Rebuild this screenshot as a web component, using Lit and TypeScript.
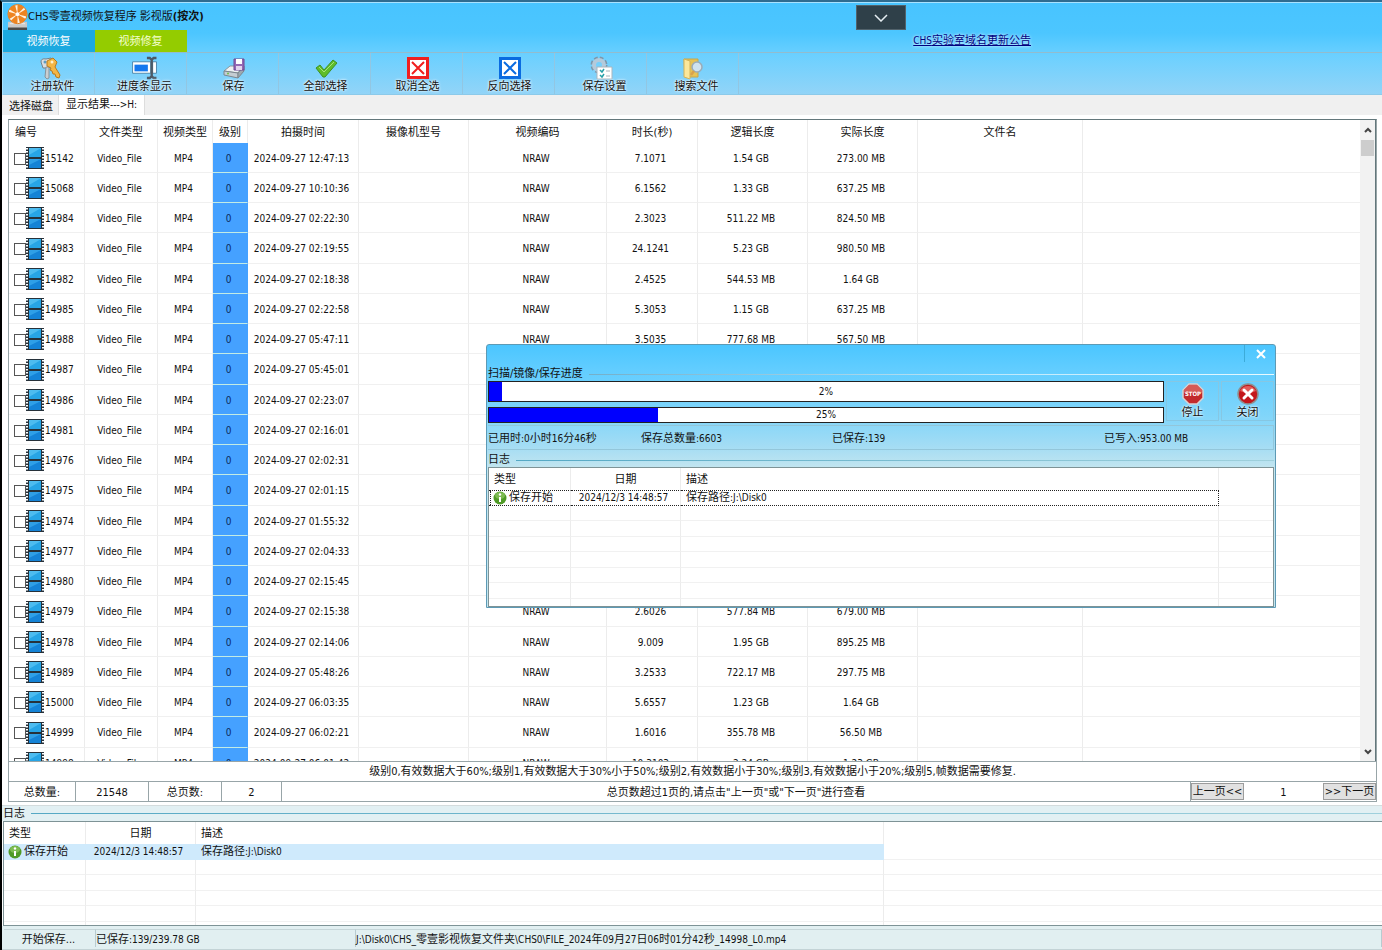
import { LitElement, html, svg, css, TemplateResult } from "lit";
import { customElement } from "lit/decorators.js";

type Row = [string, string, string, string, string];

const ROWS: Row[] = [
  ["15142", "2024-09-27 12:47:13", "7.1071", "1.54 GB", "273.00 MB"],
  ["15068", "2024-09-27 10:10:36", "6.1562", "1.33 GB", "637.25 MB"],
  ["14984", "2024-09-27 02:22:30", "2.3023", "511.22 MB", "824.50 MB"],
  ["14983", "2024-09-27 02:19:55", "24.1241", "5.23 GB", "980.50 MB"],
  ["14982", "2024-09-27 02:18:38", "2.4525", "544.53 MB", "1.64 GB"],
  ["14985", "2024-09-27 02:22:58", "5.3053", "1.15 GB", "637.25 MB"],
  ["14988", "2024-09-27 05:47:11", "3.5035", "777.68 MB", "567.50 MB"],
  ["14987", "2024-09-27 05:45:01", "", "", ""],
  ["14986", "2024-09-27 02:23:07", "", "", ""],
  ["14981", "2024-09-27 02:16:01", "", "", ""],
  ["14976", "2024-09-27 02:02:31", "", "", ""],
  ["14975", "2024-09-27 02:01:15", "", "", ""],
  ["14974", "2024-09-27 01:55:32", "", "", ""],
  ["14977", "2024-09-27 02:04:33", "", "", ""],
  ["14980", "2024-09-27 02:15:45", "", "", ""],
  ["14979", "2024-09-27 02:15:38", "2.6026", "577.84 MB", "679.00 MB"],
  ["14978", "2024-09-27 02:14:06", "9.009", "1.95 GB", "895.25 MB"],
  ["14989", "2024-09-27 05:48:26", "3.2533", "722.17 MB", "297.75 MB"],
  ["15000", "2024-09-27 06:03:35", "5.6557", "1.23 GB", "1.64 GB"],
  ["14999", "2024-09-27 06:02:21", "1.6016", "355.78 MB", "56.50 MB"],
  ["14998", "2024-09-27 06:01:42", "10.3103", "2.24 GB", "1.23 GB"],
];

const HEADS = ["编号", "文件类型", "视频类型", "级别", "拍摄时间", "摄像机型号", "视频编码", "时长(秒)", "逻辑长度", "实际长度", "文件名", ""];
const COLS = ["c76", "c73", "c55", "c35", "c111", "c110", "c138", "c91", "c110", "c110", "c165", "rest"];

// Latin runs are set one size smaller than the Chinese text around them.
const mix = (text: string) => text.split(/([\x20-\x7e]+)/).map((part, i) => (i % 2 ? html`<span class="latin">${part}</span>` : part));

const keysIcon = svg`
  <path d="M2 5 Q2 1 7 2 L12 1 L14 7 L10 11 H4Z" fill="#d9dde0" stroke="#75818a"/>
  <path d="M7 10 H10 V21 L8 22 L6 20Z" fill="#c9ced2" stroke="#87939b"/>
  <circle cx="6" cy="5" r="1.5" fill="#5c9cc4"/>
  <path d="M8 4 L14 1 L18 5 L16 10 L21 18 L20 21 L17 20 L16 17 L14 17 L13 14 L11 13 L12 11 L8 9Z" fill="#f3b646" stroke="#b77a1e"/>
  <circle cx="13" cy="5" r="1.5" fill="#fff3cf"/>`;
const barIcon = svg`
  <path d="M1 5 H20 V17 H1Z" fill="#fff" stroke="#4b86ad" stroke-width="1"/>
  <path d="M3 8 H17 V15 H3Z" fill="#1478ee"/>
  <path d="M22 5 H26 V17 H22Z" fill="#fff" stroke="#4b86ad" stroke-width="1"/>
  <path d="M16 1 H19 L21 3 L23 1 H26 M21 3 V20 M16 22 H19 L21 20 L23 22 H26" fill="none" stroke="#4d5a66" stroke-width="2.500"/>`;
const saveIcon = svg`
  <path d="M1 14 L7 9 H20 L15 16Z" fill="#eef1f3" stroke="#8b969d"/>
  <path d="M1 14 L15 16 V21 L1 18Z" fill="#c5cdd2" stroke="#7c878e"/>
  <path d="M15 16 L21 9 V14 L15 21Z" fill="#9ea9b0" stroke="#7c878e"/>
  <path d="M11 2 H21 V13 H11Z" fill="#9468b4" stroke="#6e4893"/>
  <path d="M13 2 H19 V7 H13Z" fill="#fff"/><path d="M13 9 H19 V13 H13Z" fill="#e3d4ee"/>
  <circle cx="5" cy="16.500" r="1" fill="#6fbf4a"/>`;
const checkIcon = svg`<path d="M1 11 L5 8 L9 13 L18 3 L22 6 L10 20 L8 20Z" fill="#5fbd2a" stroke="#3d9124" stroke-linejoin="round"/><path d="M4 10 L9 15 L19 5" fill="none" stroke="#a5e27a"/>`;
const boxIcon = (c: string) => svg`
  <path d="M1.500 1.500 H20.500 V20.500 H1.500Z" fill="#fff" stroke="${c}" stroke-width="3"/>
  <path d="M5 5 L17 17 M17 5 L5 17" stroke="${c}" stroke-width="2"/>`;
const settingsIcon = svg`
  <circle cx="8" cy="8" r="6" fill="none" stroke="#7d97ab" stroke-width="5" stroke-dasharray="3 1.700"/>
  <circle cx="8" cy="8" r="5" fill="none" stroke="#b4cadb" stroke-width="4"/>
  <path d="M6 10 H21 V22 H6Z" fill="#fff" stroke="#a9b6bf"/>
  <path d="M9 13 L11 15 L13 12 M9 18 L11 20 L13 17" fill="none" stroke="#25a0a8" stroke-width="1.500"/>
  <path d="M15 14 H19 M15 19 H19" stroke="#a7b3bb"/>`;
const folderIcon = svg`
  <path d="M1 2 H9 L15 2 V20 H2Z" fill="#e7c353" stroke="#c6a64a"/>
  <path d="M1 2 L7 4 V22 L1 20Z" fill="#fbe79a" stroke="#d3b358"/>
  <circle cx="14" cy="10" r="5" fill="#cfe3ef" stroke="#9aacb8" stroke-width="1.500"/>
  <path d="M11 14 L8 18" stroke="#d9a24b" stroke-width="2.500"/>`;

const TOOLS: [string, TemplateResult, boolean][] = [
  ["注册软件", keysIcon as any, true],
  ["进度条显示", barIcon as any, true],
  ["保存", saveIcon as any, false],
  ["全部选择", checkIcon as any, false],
  ["取消全选", boxIcon("#f01f1f") as any, false],
  ["反向选择", boxIcon("#0a6be0") as any, false],
  ["保存设置", settingsIcon as any, true],
  ["搜索文件", folderIcon as any, true],
];

const film = html`<svg class="film" viewBox="0 0 18 22" aria-hidden="true">
  <path d="M0 0 H18 V22 H0Z" fill="#26313a"/>
  <path d="M3 1 H15 V10 H3Z" fill="#27a5e6"/><path d="M3 12 H15 V21 H3Z" fill="#1583d6"/>
  <path d="M3 1 H15 L3 8Z" fill="#4dbcf0"/><path d="M3 12 H15 L3 18Z" fill="#2f9fe6"/>
  <path d="M1 1 V22 M17 1 V22" stroke="#fff" stroke-width="2" stroke-dasharray="1.500 1.500"/>
</svg>`;

const info = html`<svg class="info" viewBox="0 0 14 14" aria-hidden="true">
  <circle cx="7" cy="7" r="6.500" fill="#4f9a26"/><ellipse cx="7" cy="4.500" rx="5" ry="3.500" fill="#7dbb52"/>
  <path d="M7 6 V11" stroke="#fff" stroke-width="2"/><circle cx="7" cy="3.500" r="1.200" fill="#fff"/></svg>`;

const logo = html`<svg class="logo" viewBox="0 0 22 28" aria-hidden="true">
  <path d="M1 19 H21 V26 H1Z" fill="#c9c9c9"/><path d="M1 25 H21 V28 H1Z" fill="#4a4a4a"/>
  <path d="M3 21 H19" stroke="#eee"/>
  <circle cx="11" cy="11" r="10" fill="#fff3df" stroke="#d9771c"/>
  ${[0, 60, 120, 180, 240, 300].map((a) => svg`<path d="M11 11 L11 1 A10 10 0 0 1 18 4Z" fill="#ee8420" transform="rotate(${a} 11 11)"/>`)}
  <circle cx="11" cy="11" r="2" fill="#fff"/></svg>`;

@customElement("app-root")
export class AppRoot extends LitElement {
  static styles = css`
    :host {
      display: flex; flex-direction: column; height: 100vh; box-sizing: border-box; position: relative; overflow: hidden;
      border-top: 2px solid #2f6c90; border-left: 2px solid #000; background: #fff; color: #111;
      font: 11px/14px "DejaVu Sans Condensed", "Noto Sans", "Noto Sans CJK SC", sans-serif;
    }
    * { box-sizing: border-box; }
    button { font: inherit; color: inherit; padding: 0; margin: 0; border: 0; background: none; }
    .latin { font-size: 10px; }
    .top { background: linear-gradient(#48c4ff 0, #4cc6ff 30px, #6bd0ff 52px, #93d4f7 100%); border-left: 1px solid #a8e2ff; border-top: 1px solid #a8e2ff; }
    .title { display: flex; align-items: center; height: 27px; padding-left: 4px; }
    .logo { width: 21px; height: 28px; flex: none; }
    h1 { font-size: 11px; font-weight: normal; margin: 0; }
    .modes { display: flex; align-items: center; height: 22px; }
    .mode { width: 92px; height: 22px; color: #fff; background: #1ba9e0; padding-top: 1px; padding-right: 1px; }
    .mode.green { background: #94cc00; color: #f4ffd0; }
    .notice { margin-left: auto; margin-right: 351px; color: #000080; text-decoration: underline; text-shadow: 0 0 3px #fff; }
    .drawer { position: absolute; right: 476px; top: 3px; width: 50px; height: 25px; background: #2f4049; border: 1px solid #52626b; display: grid; place-items: center; }
    .drawer svg { width: 14px; height: 8px; }
    .tools { display: flex; height: 43px; border-top: 1px solid #93bccd; border-bottom: 1px solid #8ccaea; }
    .tool { width: 92px; border-right: 1px solid #92c6e2; display: flex; flex-direction: column; align-items: center; padding: 4px 0 0 2px; }
    .tool.indent { padding-left: 8px; }
    .tool svg { width: 22px; height: 22px; flex: none; overflow: visible; margin-bottom: 1px; }
    .tool.indent svg { margin-right: 6px; }
    .tool svg.wide { width: 28px; margin-right: 0; }
    .tool span, .act span { text-shadow: 0 0 3px #fff, 0 0 2px #fff; }
    .tabs { display: flex; height: 20px; padding-left: 2px; background: #f0f0f0; }
    .tab { height: 20px; padding: 3px 5px 0; border-right: 1px solid #ddd; }
    .tab.on { background: #fff; padding-top: 0; width: 86px; }

    .main { flex: 1; min-height: 0; display: flex; flex-direction: column; margin: 4px 5px 3px 6px; border: 1px solid #98a5a8; border-top-color: #63777b; }
    .list { flex: 1; min-height: 0; display: flex; overflow: hidden; }
    .clip { flex: 1; min-width: 0; overflow: hidden; }
    table { border-collapse: separate; border-spacing: 0; table-layout: fixed; width: 100%; }
    th { font-weight: normal; padding: 2px 0 0; }
    td { padding: 0; }
    .files th { height: 23px; border-right: 1px solid #ececec; }
    .files th:first-child { text-align: left; padding-left: 6px; }
    .files td { font-size: 10px; height: 30px; padding-top: 2px; text-align: center; border-right: 1px solid #ececec; border-bottom: 1px solid #f0f0f0; white-space: nowrap; }
    .files tr:nth-child(4n) td { height: 31px; }
    .files td:nth-child(n + 2) { padding-right: 3px; }
    .files td.level { background: #45a1ff; border-right-color: #45a1ff; border-bottom-color: #c3ece4; color: #0a2a5c; }
    .files th:last-child, .files td:last-child { border-right: 0; }
    .id { display: flex; align-items: center; padding-left: 5px; }
    .id input { appearance: none; width: 12px; height: 12px; margin: 0; border: 1px solid #555; background: #fff; flex: none; }
    .film { width: 18px; height: 22px; flex: none; margin: -1px 1px 0 0; }
    .c76 { width: 76px; } .c73 { width: 73px; } .c55 { width: 55px; } .c35 { width: 35px; } .c111 { width: 111px; }
    .c110 { width: 110px; } .c138 { width: 138px; } .c91 { width: 91px; } .c165 { width: 165px; } .c82 { width: 82px; }
    .c538 { width: 538px; } .c688 { width: 688px; }
    .scroll { width: 16px; background: #f2f2f2; display: flex; flex-direction: column; align-items: center; border-right: 1px solid #63777b; }
    .scroll button { height: 20px; width: 15px; display: grid; place-items: center; }
    .scroll button:last-child { height: 18px; }
    .scroll svg { width: 8px; height: 6px; }
    .thumb { width: 13px; height: 16px; background: #cdcdcd; }
    .space { flex: 1; }
    .legend { height: 20px; border-top: 1px solid #98a5a8; text-align: center; padding-top: 3px; white-space: nowrap; }
    .pager { display: flex; height: 20px; border-top: 1px solid #98a5a8; text-align: center; line-height: 21px; }
    .pager > span { border-right: 1px solid #98a5a8; height: 19px; }
    .w67 { width: 67px; } .w73 { width: 73px; } .w60 { width: 60px; }
    .grow { flex: 1; }
    .pg { background: #e1e1e1; border: 1px solid #9c9c9c; width: 53px; height: 17px; margin-top: 1px; line-height: 16px; white-space: nowrap; }
    .pager > .num { border: 0; width: 79px; }

    .group { display: flex; align-items: center; gap: 6px; height: 16px; }
    .group::after { content: ""; flex: 1; height: 1px; background: linear-gradient(90deg, #55a8c4, #9fd0dc); }
    .foot-group { background: #e2f0f3; padding-left: 1px; border-top: 1px solid #d4dcdd; }
    .log { background: #fff; border: 1px solid #7e9396; overflow: hidden; }
    .foot-log { height: 105px; flex: none; border-right: 0; margin-left: 1px; }
    .log th { height: 22px; border-right: 1px solid #ececec; }
    .log th:first-child, .log th:nth-child(3) { text-align: left; padding-left: 5px; }
    .log td { height: 16px; padding-top: 1px; border-right: 1px solid #ececec; border-bottom: 1px solid #f1f1f1; line-height: 14px; white-space: nowrap; }
    .log tr:nth-child(even) td { height: 15px; }
    .log td:nth-child(3) { padding-left: 5px; }
    .log td.date { font-size: 10px; text-align: center; padding-right: 4px; }
    .log th:last-child, .log td:last-child { border-right: 0; }
    .kind { display: flex; align-items: center; gap: 2px; padding-left: 4px; height: 14px; }
    .info { width: 14px; height: 14px; flex: none; }
    .foot-log .sel td:nth-child(-n + 3) { background: #cfeafc; border-color: #cfeafc; }
    .status { flex: none; display: flex; height: 24px; background: #e1eff1; padding: 3px 0 2px 2px; border-bottom: 1px solid #c3d3d6; }
    .status > span { border-right: 1px solid #b8cbd0; line-height: 19px; white-space: nowrap; border-top: 1px solid #c6d6d9; }
    .s1 { width: 92px; text-align: center; padding-right: 2px; } .s2 { width: 260px; }

    .dialog { position: absolute; right: 106px; top: 342px; width: 790px; border: 1px solid #5d9ab5; border-radius: 3px 3px 0 0; padding: 0 1px;
      background: linear-gradient(#4bc6ff 0, #62cdff 25px, #80d5fa 70px, #a2dcf4 100px, #c5e6ef 125px); }
    .caption { height: 22px; display: flex; justify-content: flex-end; }
    .x { width: 30px; height: 17px; border-left: 1px solid #3cabd9; display: grid; place-items: center; padding-left: 2px; }
    .x svg { width: 10px; height: 10px; }
    .dialog .group { height: 14px; line-height: 16px; }
    .scan::after { background: linear-gradient(90deg, #74afc9, #bfe9fb 60%, #eafaff); }
    .work { display: flex; gap: 2px; height: 44px; }
    .bars { flex: 1; display: flex; flex-direction: column; gap: 5px; }
    .bar { display: grid; height: 21px; border: 1px solid #222; background: #fff; }
    .bar.thin { height: 16px; }
    .bar > * { grid-area: 1 / 1; }
    .fill { background: #0000fe; }
    .pct { place-self: center; font-size: 10px; line-height: 12px; }
    .act { width: 53px; height: 40px; border: 1px solid #86c7e3; display: flex; flex-direction: column; align-items: center; padding-top: 1px; }
    .act svg { width: 22px; height: 22px; flex: none; margin-bottom: 1px; }
    .stats { display: grid; grid-template-columns: 153px 191px 1fr 169px; height: 25px; align-items: center; border: 1px solid #93c6da; border-width: 1px 1px 1px 0; margin-bottom: 3px; padding-top: 2px; white-space: nowrap; }
    .dlg-log { height: 140px; }
    .dlg-log .sel td:nth-child(-n + 3) { border-top: 1px dotted #222; border-bottom: 1px dotted #222; padding-top: 0; }
    .dlg-log .sel td:nth-child(3) { border-right: 1px dotted #222; }
    .dlg-log .sel .kind { border-left: 1px dotted #222; margin-left: 1px; padding-left: 2px; }
  `;

  logTable(c1: string, c3: string, rows: number) {
    return html`<table>
      <colgroup><col class=${c1} /><col class="c110" /><col class=${c3} /><col /></colgroup>
      <thead><tr><th>类型</th><th>日期</th><th>描述</th><th></th></tr></thead>
      <tbody>
        <tr class="sel"><td><div class="kind">${info}<span>保存开始</span></div></td><td class="date">2024/12/3 14:48:57</td><td>${mix("保存路径:J:\\Disk0")}</td><td></td></tr>
        ${Array.from({ length: rows }, () => html`<tr><td></td><td></td><td></td><td></td></tr>`)}
      </tbody>
    </table>`;
  }

  bar(value: number, thin = false) {
    return html`<div class="bar ${thin ? "thin" : ""}" role="progressbar" aria-label="进度" aria-valuenow=${value}>
      <div class="fill" style="width:${value}%"></div><span class="pct">${value}%</span></div>`;
  }

  render() {
    return html`
      <header class="top">
        <div class="title">${logo}<h1>CHS零壹视频恢复程序 影视版<b>(按次)</b></h1></div>
        <div class="modes">
          <button class="mode">视频恢复</button><button class="mode green">视频修复</button>
          <a class="notice" href="#">${mix("CHS实验室域名更新公告")}</a>
        </div>
        <nav class="tools">
          ${TOOLS.map(([label, icon, indent], i) => html`<button class="tool ${indent ? "indent" : ""}">
            <svg class=${i === 1 ? "wide" : ""} viewBox=${i === 1 ? "0 0 28 23" : "0 0 22 22"} aria-hidden="true">${icon}</svg><span>${label}</span></button>`)}
        </nav>
      </header>
      <button class="drawer" aria-label="展开"><svg viewBox="0 0 14 8"><path d="M1 1 L7 7 L13 1" fill="none" stroke="#e6eef2" stroke-width="1.500"/></svg></button>
      <div class="tabs"><button class="tab">选择磁盘</button><button class="tab on">${mix("显示结果--->H:")}</button></div>

      <main class="main">
        <div class="list">
          <div class="clip">
            <table class="files">
              <colgroup>${COLS.map((c) => html`<col class=${c} />`)}</colgroup>
              <thead><tr>${HEADS.map((h) => html`<th>${h}</th>`)}</tr></thead>
              <tbody>
                ${ROWS.map(([id, date, dur, logical, real]) => html`<tr>
                  <td><label class="id"><input type="checkbox" />${film}${id}</label></td>
                  <td>Video_File</td><td>MP4</td><td class="level">0</td><td>${date}</td><td></td>
                  <td>${dur ? "NRAW" : ""}</td><td>${dur}</td><td>${logical}</td><td>${real}</td><td></td><td></td>
                </tr>`)}
              </tbody>
            </table>
          </div>
          <div class="scroll">
            <button aria-label="向上"><svg viewBox="0 0 8 6"><path d="M1 5 L4 2 L7 5" fill="none" stroke="#444" stroke-width="2"/></svg></button>
            <div class="thumb"></div><div class="space"></div>
            <button aria-label="向下"><svg viewBox="0 0 8 6"><path d="M1 1 L4 4 L7 1" fill="none" stroke="#444" stroke-width="2"/></svg></button>
          </div>
        </div>
        <div class="legend">级别0,有效数据大于60%;级别1,有效数据大于30%小于50%;级别2,有效数据小于30%;级别3,有效数据小于20%;级别5,帧数据需要修复.</div>
        <div class="pager">
          <span class="w67">总数量:</span><span class="w73">21548</span><span class="w73">总页数:</span><span class="w60">2</span>
          <span class="grow">总页数超过1页的,请点击"上一页"或"下一页"进行查看</span>
          <button class="pg">上一页&lt;&lt;</button><span class="num">1</span><button class="pg">&gt;&gt;下一页</button>
        </div>
      </main>

      <div class="group foot-group">日志</div>
      <div class="log foot-log">${this.logTable("c82", "c688", 5)}</div>
      <footer class="status"><span class="s1">开始保存...</span><span class="s2">${mix("已保存:139/239.78 GB")}</span><span class="grow">${mix("J:\\Disk0\\CHS_零壹影视恢复文件夹\\CHS0\\FILE_2024年09月27日06时01分42秒_14998_L0.mp4")}</span></footer>

      <section class="dialog" role="dialog" aria-label="扫描/镜像/保存进度">
        <div class="caption"><button class="x" aria-label="关闭窗口"><svg viewBox="0 0 10 10"><path d="M1 1 L9 9 M9 1 L1 9" stroke="#fff" stroke-width="2"/></svg></button></div>
        <div class="group scan">扫描/镜像/保存进度</div>
        <div class="work">
          <div class="bars">${this.bar(2)}${this.bar(25, true)}</div>
          <button class="act"><svg viewBox="0 0 22 22" aria-hidden="true"><path d="M7 1 H15 L21 7 V15 L15 21 H7 L1 15 V7Z" fill="#c22a2c" stroke="#d9d2d2" stroke-width="1.500"/><path d="M7 2 H15 L20 7 V10 H2 V7Z" fill="#d65a55"/>
            <text x="11" y="13" text-anchor="middle" font-size="6" font-weight="bold" fill="#fff">STOP</text></svg><span>停止</span></button>
          <button class="act"><svg viewBox="0 0 22 22" aria-hidden="true"><circle cx="11" cy="11" r="10" fill="#c3171b" stroke="#8f8f8f" stroke-width="1.500"/><path d="M3 8 A9 9 0 0 1 19 8 Q11 12 3 8Z" fill="#e25b58"/><path d="M7 7 L15 15 M15 7 L7 15" stroke="#fff" stroke-width="3" stroke-linecap="round"/></svg><span>关闭</span></button>
        </div>
        <div class="stats"><span>${mix("已用时:0小时16分46秒")}</span><span>${mix("保存总数量:6603")}</span><span>${mix("已保存:139")}</span><span>${mix("已写入:953.00 MB")}</span></div>
        <div class="group">日志</div>
        <div class="log dlg-log">${this.logTable("c82", "c538", 7)}</div>
      </section>
    `;
  }
}
